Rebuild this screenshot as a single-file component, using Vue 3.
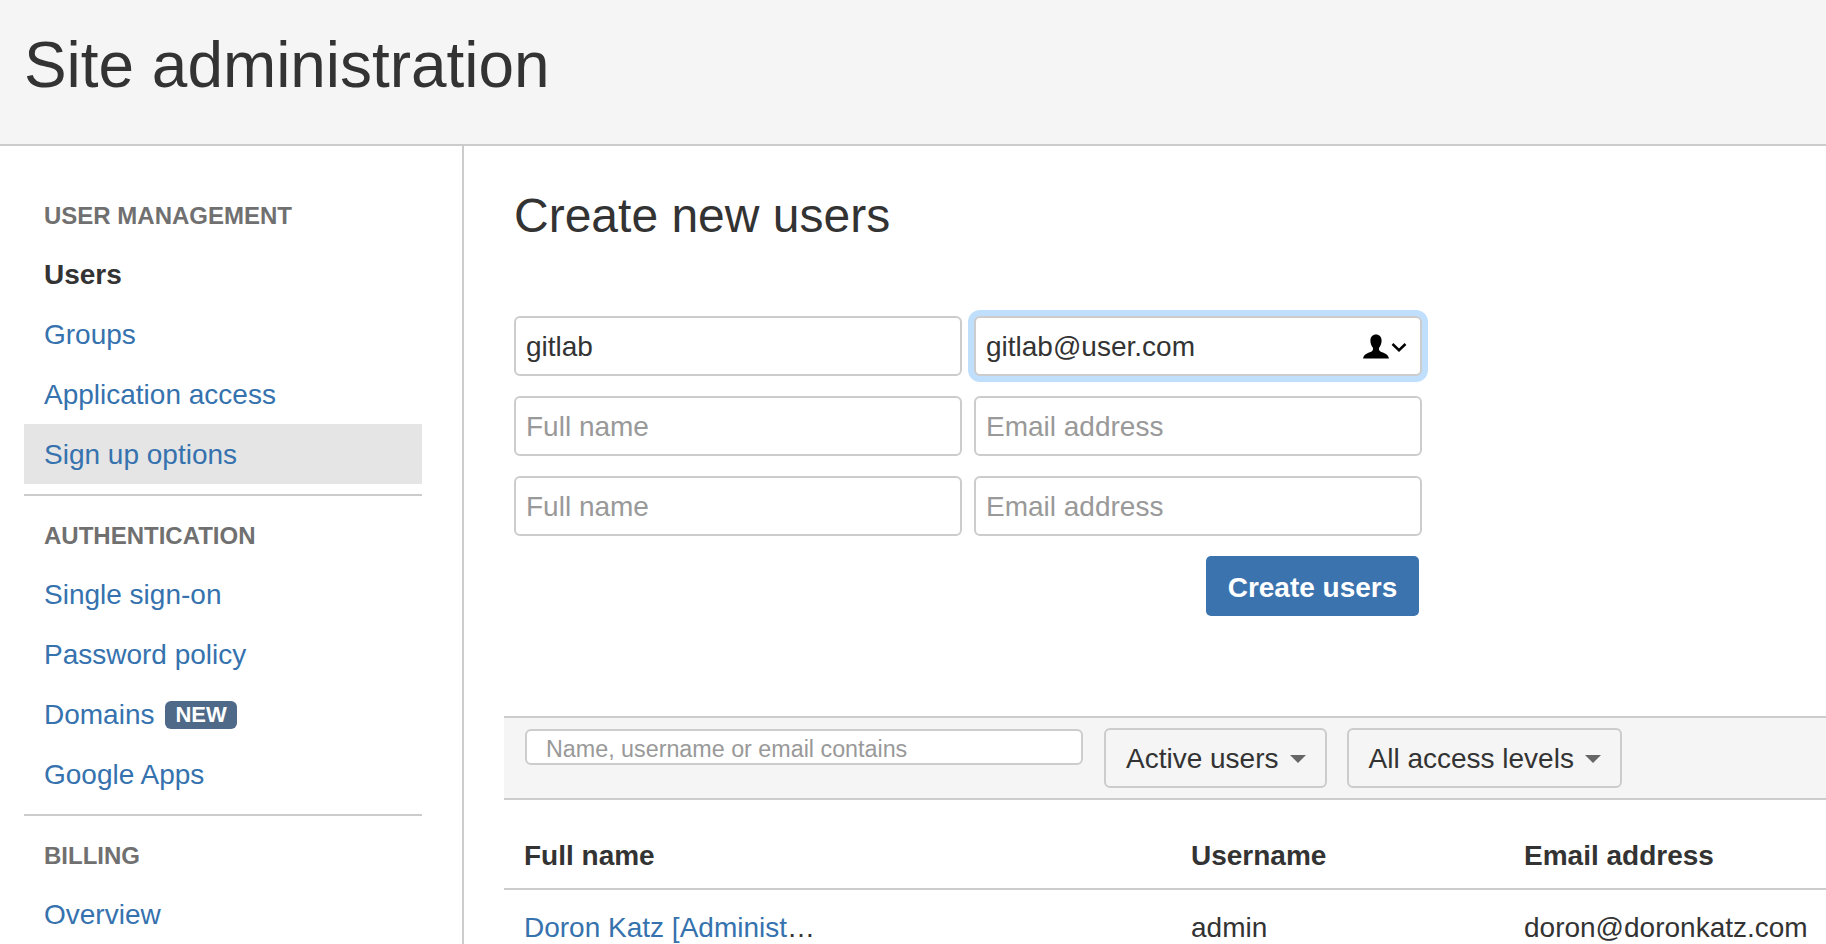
<script setup>
const sections = [
  { title: 'USER MANAGEMENT', items: [
    { label: 'Users', current: true },
    { label: 'Groups' },
    { label: 'Application access' },
    { label: 'Sign up options', active: true }
  ]},
  { title: 'AUTHENTICATION', items: [
    { label: 'Single sign-on' },
    { label: 'Password policy' },
    { label: 'Domains', badge: 'NEW' },
    { label: 'Google Apps' }
  ]},
  { title: 'BILLING', items: [{ label: 'Overview' }] }
]
</script>

<template>
  <div class="page">
    <header class="top"><h1>Site administration</h1></header>
    <div class="body">
      <aside class="side">
        <section v-for="s in sections" :key="s.title" class="group">
          <h3>{{ s.title }}</h3>
          <a v-for="i in s.items" :key="i.label" class="item" :class="{ current: i.current, active: i.active }">
            {{ i.label }}<span v-if="i.badge" class="badge">{{ i.badge }}</span>
          </a>
        </section>
      </aside>
      <main class="main">
        <h2>Create new users</h2>
        <div class="form">
          <div class="row">
            <div class="field"><input value="gitlab" /></div>
            <div class="field focus">
              <input value="gitlab@user.com" />
              <svg class="person" width="46" height="26" viewBox="0 0 46 26">
                <path d="M14 .5c-3.400 0-5.600 2.500-5.600 6 0 2.600.9 5.100 2.200 6.800.7 1 .6 2.800-.4 3.600C7.700 18.800 2 19 1 24.500h26c-1-5.500-6.700-5.700-9.200-7.600-1-.8-1.100-2.600-.4-3.600 1.300-1.700 2.200-4.200 2.200-6.800 0-3.500-2.200-6-5.600-6z" fill="#000"/>
                <path d="M30.500 10l6.500 6.200L43.500 10" fill="none" stroke="#000" stroke-width="2.500"/>
              </svg>
            </div>
          </div>
          <div class="row">
            <div class="field"><input placeholder="Full name" /></div>
            <div class="field"><input placeholder="Email address" /></div>
          </div>
          <div class="row">
            <div class="field"><input placeholder="Full name" /></div>
            <div class="field"><input placeholder="Email address" /></div>
          </div>
          <div class="actions"><button class="primary">Create users</button></div>
        </div>
        <div class="filter">
          <input class="search" placeholder="Name, username or email contains" />
          <button class="drop">Active users<i class="caret"></i></button>
          <button class="drop">All access levels<i class="caret"></i></button>
        </div>
        <div class="table">
          <div class="tr th"><span class="c1">Full name</span><span class="c2">Username</span><span class="c3">Email address</span></div>
          <div class="tr td"><span class="c1"><a>Doron Katz [Administ</a>…</span><span class="c2">admin</span><span class="c3">doron@doronkatz.com</span></div>
        </div>
      </main>
    </div>
  </div>
</template>

<style>
html, body { margin: 0; overflow: hidden; background: #fff; }
</style>

<style scoped>
.page { width: 1826px; height: 944px; overflow: hidden; font-family: "Liberation Sans", Arial, sans-serif; font-size: 28px; color: #333; }
.top { box-sizing: border-box; height: 146px; background: #f5f5f5; border-bottom: 2px solid #ccc; display: flex; align-items: center; padding: 0 0 13px 24px; }
h1 { margin: 0; font-size: 63.9px; font-weight: 400; line-height: 1; color: #333; }
.body { display: flex; height: 798px; }
.side { box-sizing: border-box; width: 464px; flex: none; border-right: 2px solid #ccc; padding: 40px 40px 0 24px; }
.group { border-bottom: 2px solid #ccc; padding-bottom: 10px; }
.group:last-child { border-bottom: 0; padding-bottom: 0; }
h3 { margin: 0; padding: 1px 0 0 20px; height: 57px; line-height: 58px; font-size: 24px; font-weight: 700; color: #707070; }
.group + .group h3 { margin-top: 10px; }
.item { box-sizing: border-box; display: flex; align-items: center; height: 60px; padding: 2px 0 0 20px; color: #3572ae; }
.item.current { font-weight: 700; color: #333; }
.item.active { background: #e5e5e5; }
.badge { margin-left: 11px; background: #4e6a88; color: #fff; font-size: 22px; font-weight: 700; line-height: 28px; padding: 0 10px; border-radius: 6px; }
.main { flex: 1; min-width: 0; padding: 38px 0 0 50px; }
h2 { margin: 0; font-size: 48px; font-weight: 400; line-height: 64px; color: #333; }
.form { margin-top: 68px; width: 908px; display: flex; flex-direction: column; gap: 20px; }
.row { display: flex; gap: 12px; }
.field { position: relative; flex: 1; }
input { display: block; box-sizing: border-box; width: 100%; height: 60px; font: inherit; color: #333; padding: 2px 10px 0; border: 2px solid #ccc; border-radius: 6px; background: #fff; outline: 0; }
input::placeholder { color: #999; opacity: 1; }
.focus input { box-shadow: 0 0 0 6px #bfdffc; }
.person { position: absolute; right: 14px; top: 18px; }
.actions { display: flex; justify-content: flex-end; padding-right: 3px; }
.primary { width: 213px; height: 60px; background: #3b73af; color: #fff; border: 0; border-radius: 5px; font: inherit; font-weight: 700; padding: 3px 0 0; }
.filter { box-sizing: border-box; margin-top: 100px; margin-left: -10px; height: 84px; background: #f5f5f5; border-top: 2px solid #ccc; border-bottom: 2px solid #ccc; display: flex; align-items: flex-start; padding: 10px 21px 0; }
.search { width: 558px; height: 36px; margin: 1px 21px 0 0; font-size: 23.3px; padding: 5px 19px 0; flex: none; }
.drop { box-sizing: border-box; height: 60px; margin-right: 20px; font: inherit; color: #333; background: #f5f5f5; border: 2px solid #ccc; border-radius: 6px; padding: 2px 19px 0 20px; display: flex; align-items: center; flex: none; }
.caret { margin-left: 11px; border-left: 8px solid transparent; border-right: 8px solid transparent; border-top: 8px solid #666; }
.table { margin-left: -10px; margin-top: 20px; }
.tr { box-sizing: border-box; display: flex; align-items: center; padding-left: 20px; }
.th { font-weight: 700; border-bottom: 2px solid #ccc; height: 70px; padding-top: 3px; }
.td { height: 75px; }
.c1 { width: 667px; }
.c2 { width: 333px; }
.c3 { white-space: nowrap; }
.c1 a { color: #3572ae; }
</style>
